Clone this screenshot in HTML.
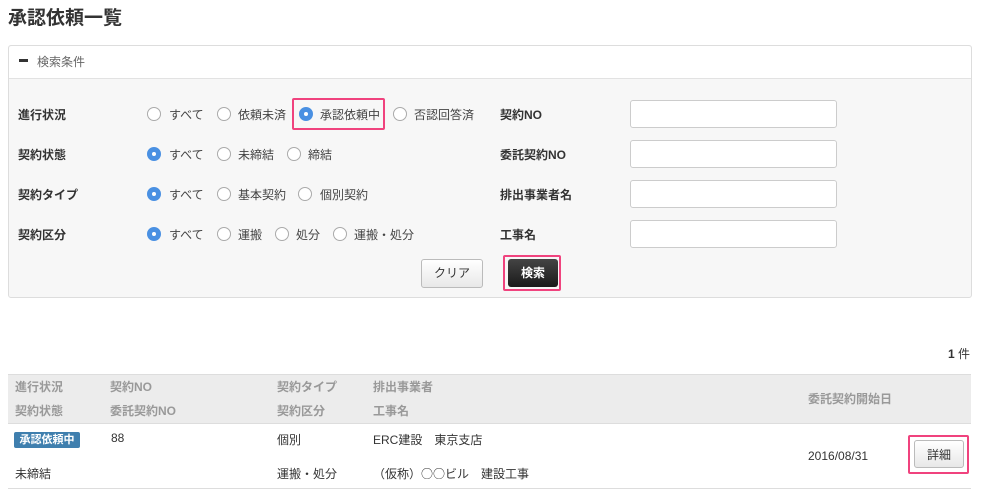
<!DOCTYPE html>
<html><head><meta charset="utf-8"><style>
body{margin:0;width:982px;height:501px;background:#fff;font-family:"Liberation Sans","Noto Sans CJK JP",sans-serif;color:#333;position:relative;overflow:hidden}
.a{position:absolute;white-space:nowrap}
h1{position:absolute;left:8px;top:3px;margin:0;font-size:19px;font-weight:bold;color:#333}
.panel{position:absolute;left:8px;top:45px;width:962px;height:251px;border:1px solid #ddd;border-radius:3px;background:#f7f7f7}
.ph{position:absolute;left:0;top:0;width:962px;height:32px;background:#fff;border-bottom:1px solid #e2e2e2;border-radius:3px 3px 0 0}
.lbl{font-size:12px;font-weight:bold;color:#333}
.opt{font-size:12px;color:#444}
.r{position:absolute;width:12px;height:12px;border:1px solid #aaa;border-radius:50%;background:#fff}
.r.on{background:#4a90e2;border-color:#4a90e2}
.r.on::after{content:"";position:absolute;left:4px;top:4px;width:4px;height:4px;border-radius:50%;background:#fff}
.in{position:absolute;left:630px;width:205px;height:26px;border:1px solid #ccc;border-radius:3px;background:#fff}
.th{font-size:12px;font-weight:bold;color:#999}
.td{font-size:12px;color:#333}
.cjk{font-family:"Noto Sans CJK JP",sans-serif;font-size:12px}
</style></head><body>
<h1>承認依頼一覧</h1>
<div class="panel"><div class="ph"></div></div>
<div class="a" style="left:19px;top:59px;width:9px;height:3px;background:#333"></div>
<div class="a opt" style="left:37px;top:53px;color:#666">検索条件</div>

<div class="a lbl" style="left:18px;top:106px">進行状況</div>
<div class="a lbl" style="left:18px;top:146px">契約状態</div>
<div class="a lbl" style="left:18px;top:186px">契約タイプ</div>
<div class="a lbl" style="left:18px;top:226px">契約区分</div>

<div class="r" style="left:147px;top:107px"></div><div class="a opt" style="left:169px;top:106px">すべて</div>
<div class="r" style="left:217px;top:107px"></div><div class="a opt" style="left:238px;top:106px">依頼未済</div>
<div class="a" style="left:292px;top:98px;width:89px;height:28px;border:2px solid #f0437e;border-radius:2px"></div>
<div class="r on" style="left:299px;top:107px"></div><div class="a opt" style="left:320px;top:106px">承認依頼中</div>
<div class="r" style="left:393px;top:107px"></div><div class="a opt" style="left:414px;top:106px">否認回答済</div>

<div class="r on" style="left:147px;top:147px"></div><div class="a opt" style="left:169px;top:146px">すべて</div>
<div class="r" style="left:217px;top:147px"></div><div class="a opt" style="left:238px;top:146px">未締結</div>
<div class="r" style="left:287px;top:147px"></div><div class="a opt" style="left:308px;top:146px">締結</div>

<div class="r on" style="left:147px;top:187px"></div><div class="a opt" style="left:169px;top:186px">すべて</div>
<div class="r" style="left:217px;top:187px"></div><div class="a opt" style="left:238px;top:186px">基本契約</div>
<div class="r" style="left:298px;top:187px"></div><div class="a opt" style="left:320px;top:186px">個別契約</div>

<div class="r on" style="left:147px;top:227px"></div><div class="a opt" style="left:169px;top:226px">すべて</div>
<div class="r" style="left:217px;top:227px"></div><div class="a opt" style="left:238px;top:226px">運搬</div>
<div class="r" style="left:275px;top:227px"></div><div class="a opt" style="left:296px;top:226px">処分</div>
<div class="r" style="left:333px;top:227px"></div><div class="a opt" style="left:354px;top:226px">運搬・処分</div>

<div class="a lbl" style="left:500px;top:106px">契約NO</div>
<div class="a lbl" style="left:500px;top:146px">委託契約NO</div>
<div class="a lbl" style="left:500px;top:186px">排出事業者名</div>
<div class="a lbl" style="left:500px;top:226px">工事名</div>
<div class="in" style="top:100px"></div>
<div class="in" style="top:140px"></div>
<div class="in" style="top:180px"></div>
<div class="in" style="top:220px"></div>

<div class="a opt" style="left:421px;top:259px;width:60px;height:27px;border:1px solid #bbb;border-radius:3px;background:linear-gradient(#fff,#e8e8e8);text-align:center;line-height:27px;color:#333">クリア</div>
<div class="a" style="left:503px;top:255px;width:54px;height:32px;border:2px solid #f0437e;border-radius:2px"></div>
<div class="a" style="left:508px;top:259px;width:50px;height:28px;border-radius:3px;background:linear-gradient(#444,#1a1a1a);color:#fff;font-size:12px;font-weight:bold;text-align:center;line-height:28px">検索</div>

<div class="a" style="left:948px;top:345px;font-size:12px"><b>1</b> 件</div>

<div class="a" style="left:8px;top:374px;width:963px;height:48px;background:#ececec;border-top:1px solid #ddd;border-bottom:1px solid #ddd"></div>
<div class="a th" style="left:15px;top:378px">進行状況</div>
<div class="a th" style="left:15px;top:402px">契約状態</div>
<div class="a th" style="left:110px;top:378px">契約NO</div>
<div class="a th" style="left:110px;top:402px">委託契約NO</div>
<div class="a th" style="left:277px;top:378px">契約タイプ</div>
<div class="a th" style="left:277px;top:402px">契約区分</div>
<div class="a th" style="left:373px;top:378px">排出事業者</div>
<div class="a th" style="left:373px;top:402px">工事名</div>
<div class="a th" style="left:808px;top:390px">委託契約開始日</div>

<div class="a" style="left:14px;top:432px;width:66px;height:16px;background:#3f7fae;border-radius:2px;color:#fff;font-size:11px;font-weight:bold;text-align:center;line-height:16px">承認依頼中</div>
<div class="a td" style="left:111px;top:431px">88</div>
<div class="a td" style="left:15px;top:465px">未締結</div>
<div class="a td" style="left:277px;top:431px">個別</div>
<div class="a td" style="left:277px;top:465px">運搬・処分</div>
<div class="a td" style="left:373px;top:431px">ERC建設　東京支店</div>
<div class="a td" style="left:373px;top:465px">（仮称）<span class="cjk">○○</span>ビル　建設工事</div>
<div class="a td" style="left:808px;top:449px">2016/08/31</div>
<div class="a" style="left:908px;top:435px;width:61px;height:39px;border:2px solid #f0437e;border-radius:2px;box-sizing:border-box"></div>
<div class="a td" style="left:914px;top:440px;width:50px;height:28px;border:1px solid #bbb;border-radius:3px;background:linear-gradient(#fff,#e8e8e8);text-align:center;line-height:28px;box-sizing:border-box">詳細</div>
<div class="a" style="left:8px;top:488px;width:963px;height:1px;background:#ddd"></div>
</body></html>
